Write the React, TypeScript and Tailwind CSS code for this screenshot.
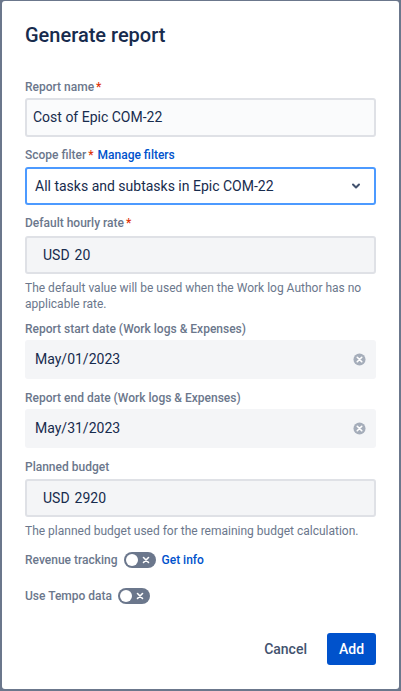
import React from "react";

const font = { fontFamily: 'Roboto, "Segoe UI", "Noto Sans", sans-serif' };

function Label({ children }: { children: React.ReactNode }) {
  return (
    <div className="text-[12px] leading-[16px] font-medium text-[#6b778c]">{children}</div>
  );
}

function Req() {
  return <span className="text-[#de350b] ml-[2px]">*</span>;
}

function ClearIcon() {
  return (
    <svg width="13" height="13" viewBox="0 0 14 14">
      <circle cx="7" cy="7" r="6.5" fill="#a5adba" />
      <path d="M4.6 4.6 L9.4 9.4 M9.4 4.6 L4.6 9.4" stroke="#fff" strokeWidth="1.8" strokeLinecap="round" />
    </svg>
  );
}

function Toggle() {
  return (
    <div className="w-[32px] h-[16px] rounded-full bg-[#6b778c] flex items-center px-[2px] justify-between">
      <div className="w-[12px] h-[12px] rounded-full bg-white" />
      <svg width="10" height="10" viewBox="0 0 10 10" className="mr-[3px]">
        <path d="M2.5 2.5 L7.5 7.5 M7.5 2.5 L2.5 7.5" stroke="#fff" strokeWidth="1.6" strokeLinecap="round" />
      </svg>
    </div>
  );
}

export default function App() {
  return (
    <div className="w-[401px] h-[691px] bg-[#6b778c] pl-[2px] pr-[2px] pt-[1px] pb-[2px]" style={font}>
      <div className="w-full h-full bg-white rounded-[3px] px-[23px] flex flex-col text-[#172b4d]">
        <h1 className="text-[20px] leading-[24px] font-medium mt-[22px] text-[#172b4d]">Generate report</h1>

        <div className="mt-[32px]">
          <Label>
            Report name<Req />
          </Label>
          <div className="mt-[3px] h-[39px] bg-[#fafbfc] border-2 border-[#dfe1e6] rounded-[3px] flex items-center px-[6px] text-[14px]">
            Cost of Epic COM-22
          </div>
        </div>

        <div className="mt-[10px]">
          <Label>
            Scope filter<Req /> <span className="text-[#0052cc] ml-[1px]">Manage filters</span>
          </Label>
          <div className="mt-[4px] h-[38px] bg-white border-2 border-[#4c9aff] rounded-[3px] flex items-center justify-between pl-[8px] pr-[12px] text-[14px]">
            <span>All tasks and subtasks in Epic COM-22</span>
            <svg width="12" height="12" viewBox="0 0 12 12">
              <path d="M3 4.5 L6 7.5 L9 4.5" fill="none" stroke="#42526e" strokeWidth="2" strokeLinecap="round" strokeLinejoin="round" />
            </svg>
          </div>
        </div>

        <div className="mt-[10px]">
          <Label>
            Default hourly rate<Req />
          </Label>
          <div className="mt-[5px] h-[38px] bg-[#f4f5f7] border-2 border-[#dfe1e6] rounded-[3px] flex items-center px-[16px] text-[14px] gap-[5px]">
            <span>USD</span>
            <span>20</span>
          </div>
          <p className="mt-[6px] text-[12px] leading-[16px] text-[#6b778c]">
            The default value will be used when the Work log Author has no applicable rate.
          </p>
        </div>

        <div className="mt-[9px]">
          <Label>Report start date (Work logs &amp; Expenses)</Label>
          <div className="mt-[3px] h-[39px] bg-[#f4f5f7] rounded-[3px] flex items-center justify-between pl-[10px] pr-[10px] text-[14px]">
            <span>May/01/2023</span>
            <ClearIcon />
          </div>
        </div>

        <div className="mt-[11px]">
          <Label>Report end date (Work logs &amp; Expenses)</Label>
          <div className="mt-[3px] h-[39px] bg-[#f4f5f7] rounded-[3px] flex items-center justify-between pl-[10px] pr-[10px] text-[14px]">
            <span>May/31/2023</span>
            <ClearIcon />
          </div>
        </div>

        <div className="mt-[11px]">
          <Label>Planned budget</Label>
          <div className="mt-[4px] h-[38px] bg-[#f4f5f7] border-2 border-[#dfe1e6] rounded-[3px] flex items-center px-[16px] text-[14px] gap-[5px]">
            <span>USD</span>
            <span>2920</span>
          </div>
          <p className="mt-[6px] text-[12px] leading-[16px] text-[#6b778c]">
            The planned budget used for the remaining budget calculation.
          </p>
        </div>

        <div className="mt-[13px] flex items-center gap-[6px] text-[12px] leading-[16px]">
          <span className="font-medium text-[#6b778c]">Revenue tracking</span>
          <Toggle />
          <span className="font-medium text-[#0052cc]">Get info</span>
        </div>

        <div className="mt-[20px] flex items-center gap-[6px] text-[12px] leading-[16px]">
          <span className="font-medium text-[#6b778c]">Use Tempo data</span>
          <Toggle />
        </div>

        <div className="mt-[29px] flex justify-end items-center gap-[20px]">
          <span className="text-[14px] font-medium text-[#42526e]">Cancel</span>
          <div className="h-[32px] w-[49px] rounded-[3px] bg-[#0052cc] text-white text-[14px] font-medium flex items-center justify-center">
            Add
          </div>
        </div>
      </div>
    </div>
  );
}
